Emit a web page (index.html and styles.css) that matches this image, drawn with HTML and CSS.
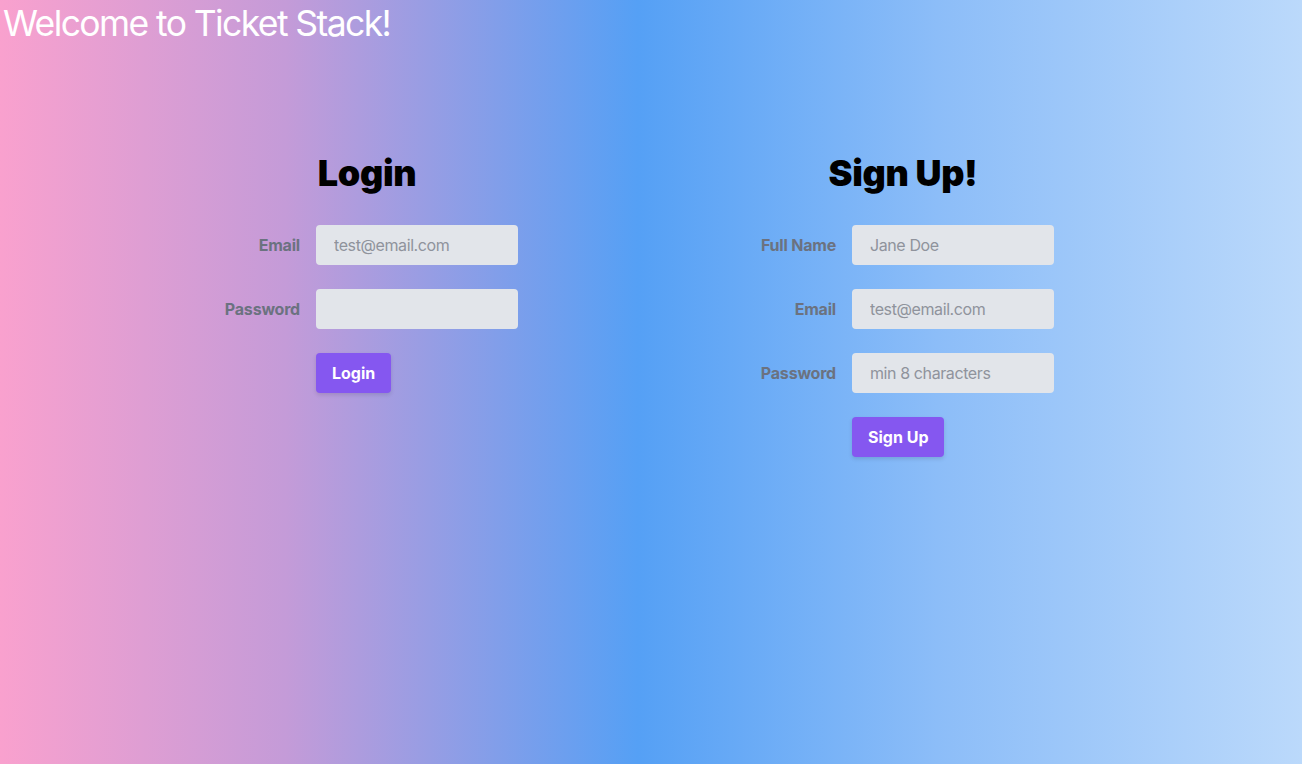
FILE: index.html
```html
<!DOCTYPE html>
<html lang="en">
<head>
<meta charset="utf-8">
<title>Ticket Stack</title>
<link rel="stylesheet" href="styles.css">
</head>
<body>
<div class="page">
  <h1 class="title">Welcome to Ticket Stack!</h1>
  <div class="forms">
    <section class="panel">
      <h2 class="panel-title">Login</h2>
      <form class="form">
        <div class="row">
          <label class="label">Email</label>
          <input class="input" type="text" placeholder="test@email.com">
        </div>
        <div class="row">
          <label class="label">Password</label>
          <input class="input" type="password">
        </div>
        <div class="row">
          <span class="label"></span>
          <button class="btn" type="button">Login</button>
        </div>
      </form>
    </section>
    <section class="panel">
      <h2 class="panel-title">Sign Up!</h2>
      <form class="form">
        <div class="row">
          <label class="label">Full Name</label>
          <input class="input" type="text" placeholder="Jane Doe">
        </div>
        <div class="row">
          <label class="label">Email</label>
          <input class="input" type="text" placeholder="test@email.com">
        </div>
        <div class="row">
          <label class="label">Password</label>
          <input class="input" type="password" placeholder="min 8 characters">
        </div>
        <div class="row">
          <span class="label"></span>
          <button class="btn" type="button">Sign Up</button>
        </div>
      </form>
    </section>
  </div>
</div>
</body>
</html>
```
FILE: styles.css
```css
* { box-sizing: border-box; }
html, body { margin: 0; padding: 0; height: 100%; }
body {
  font-family: Inter, "Noto Sans", "Liberation Sans", sans-serif;
  background: linear-gradient(to right, #f9a1ce 0%, #c49bd8 22%, #55a0f5 49%, #8cbdf8 72%, #bbd9fb 100%);
  min-height: 764px;
}
.page { min-height: 764px; }
.title {
  margin: 0;
  padding: 4px 0 0 3px;
  font-size: 35.5px;
  line-height: 40px;
  font-weight: 400;
  color: #fff;
  letter-spacing: -1.6px;
}
.forms {
  display: flex;
  align-items: flex-start;
  gap: 234px;
  padding-left: 216px;
  margin-top: 109px;
}
.panel { width: 302px; }
.panel-title {
  margin: 0 0 32px 0;
  text-align: center;
  font-size: 36px;
  line-height: 40px;
  font-weight: 900;
  color: #000;
  letter-spacing: -0.3px;
}
.form { display: flex; flex-direction: column; gap: 24px; }
.row { display: flex; align-items: center; }
.label {
  width: 100px;
  padding-right: 16px;
  text-align: right;
  font-size: 16px;
  font-weight: 700;
  color: #6b7280;
  letter-spacing: -0.2px;
  flex: none;
}
.input {
  width: 202px;
  height: 40px;
  background: #e2e5ea;
  border: 2px solid #e2e5ea;
  border-radius: 4px;
  padding: 0 16px;
  font-family: inherit;
  font-size: 16px;
  letter-spacing: -0.4px;
  color: #374151;
  outline: none;
}
.input::placeholder { color: #8f939c; }
.btn {
  height: 40px;
  padding: 0 16px;
  border: none;
  border-radius: 4px;
  background: #8557f0;
  color: #fff;
  font-family: inherit;
  font-size: 16px;
  font-weight: 700;
  box-shadow: 0 2px 4px rgba(0,0,0,0.12);
  cursor: pointer;
}
```
